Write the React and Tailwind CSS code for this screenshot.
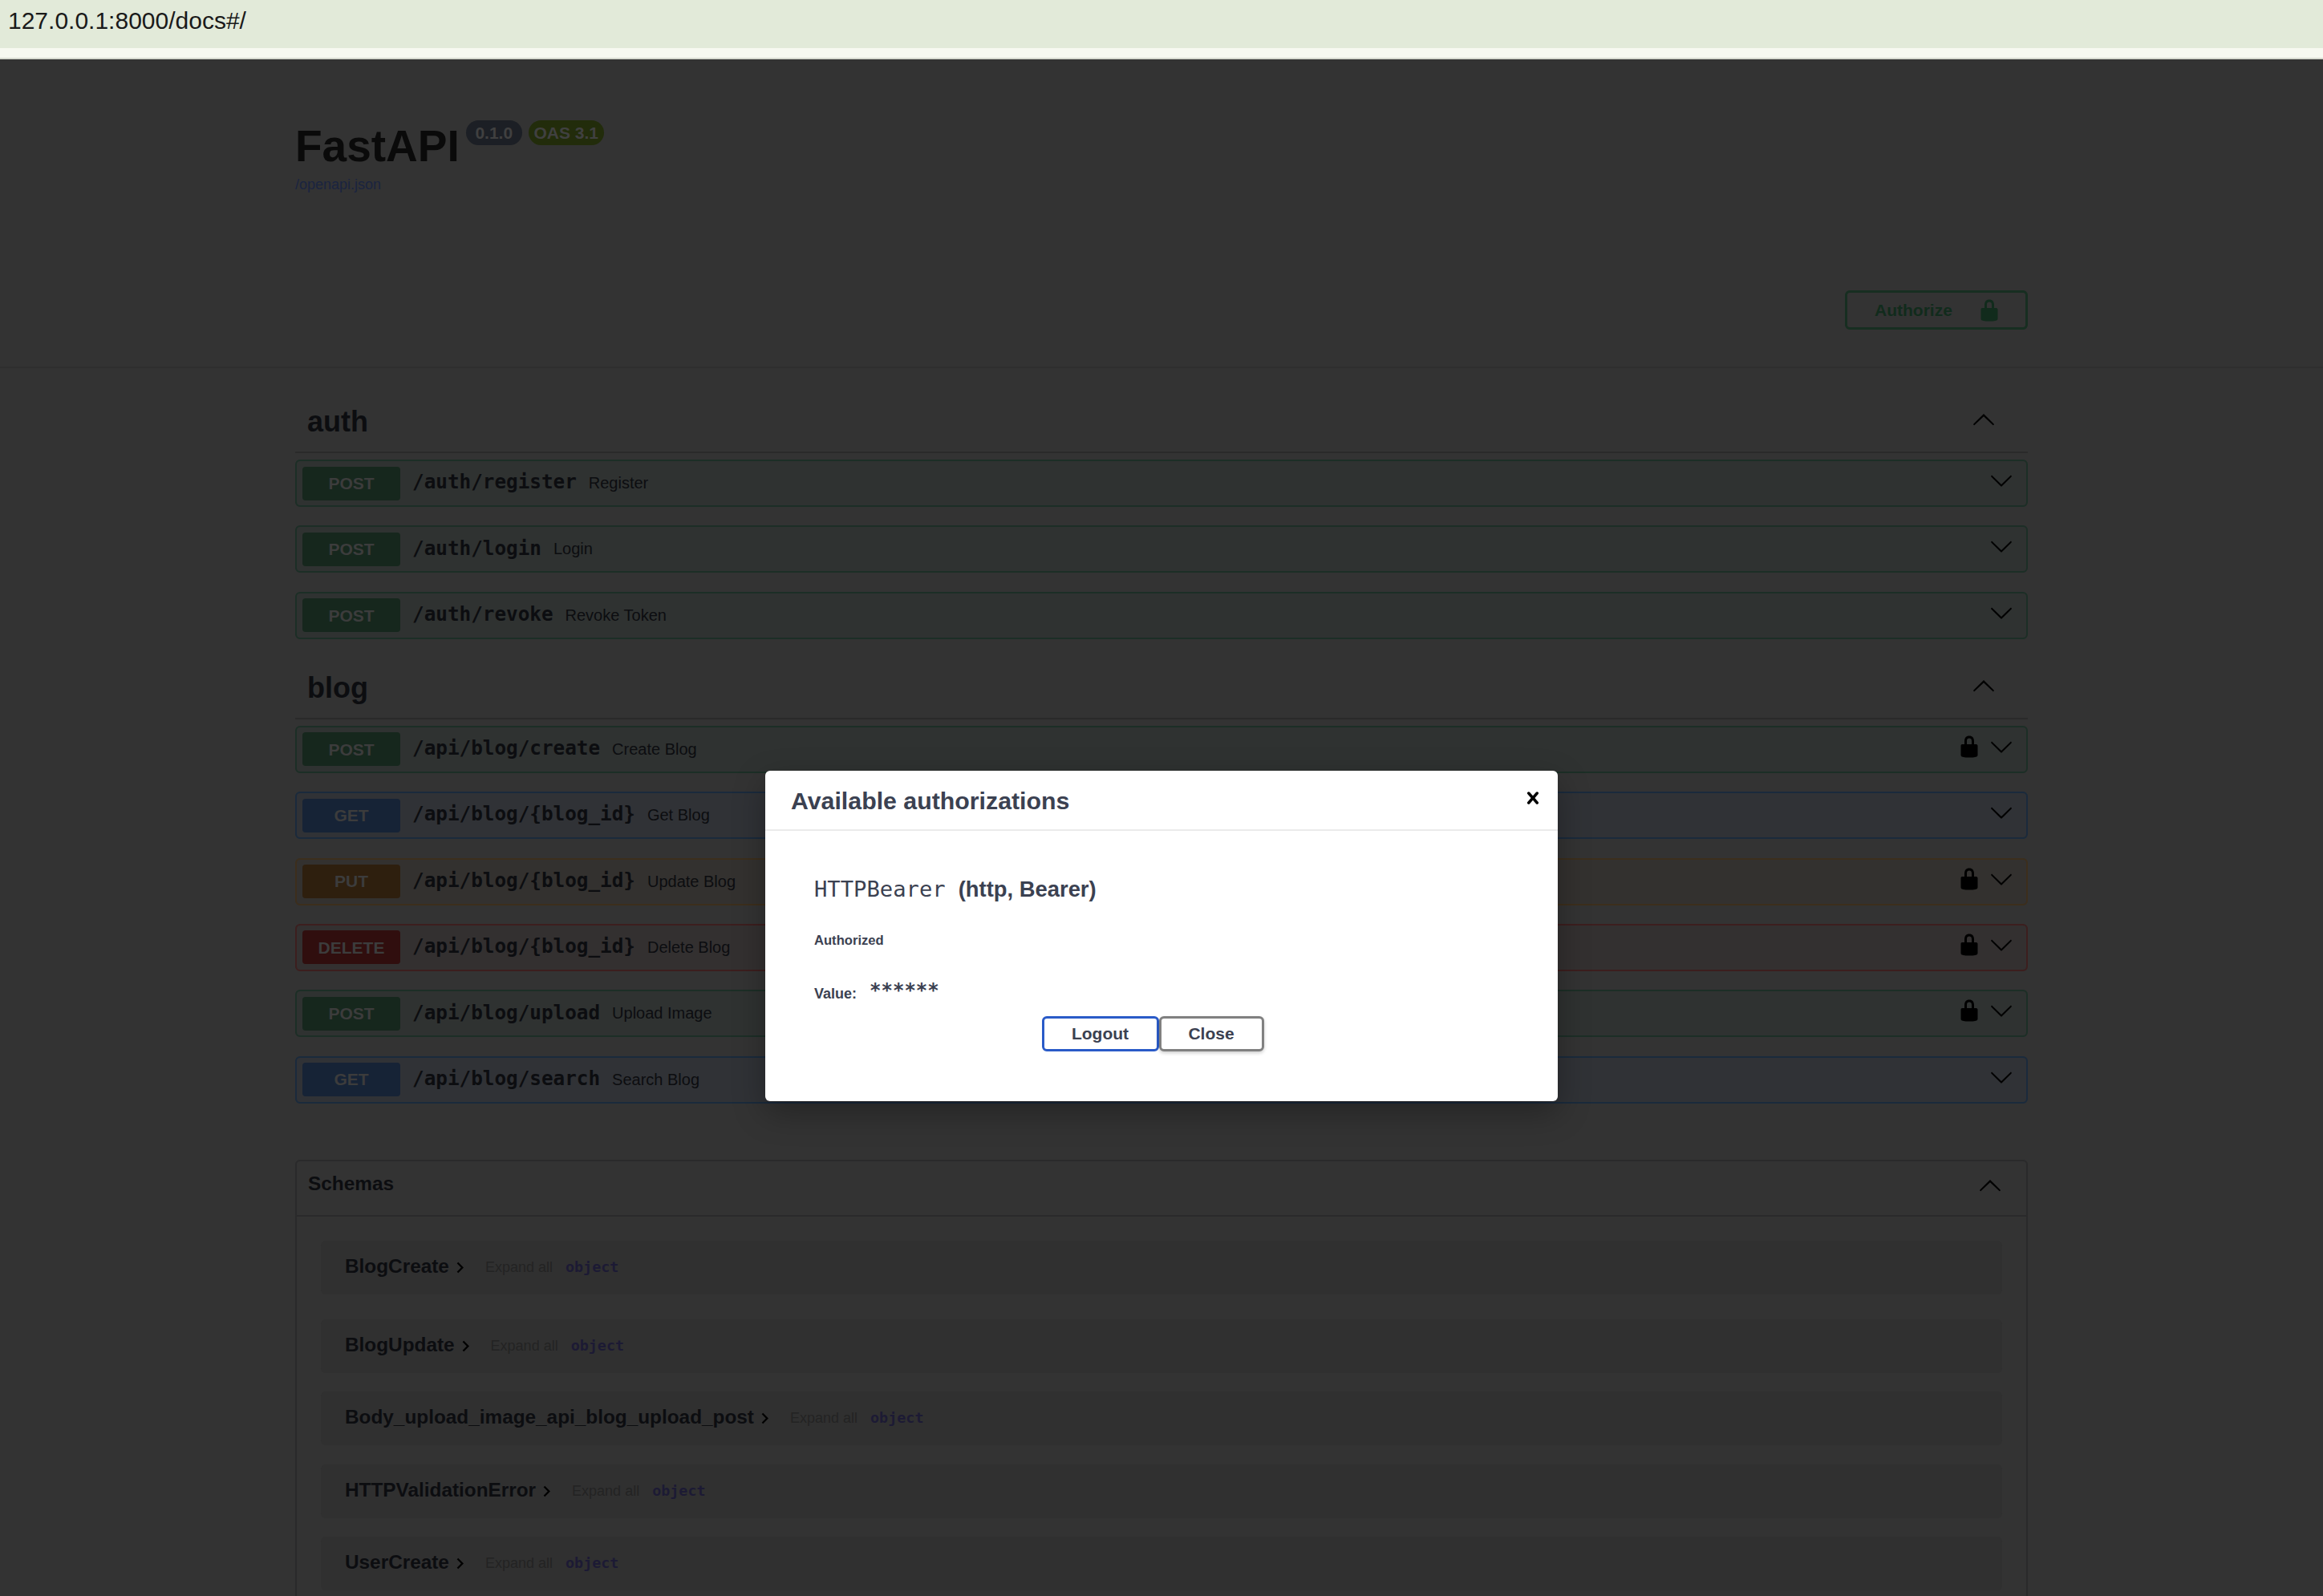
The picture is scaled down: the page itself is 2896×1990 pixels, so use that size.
import React from "react";

const LOCK = "M15.8 8H14V5.6C14 2.703 12.665 1 10 1 7.334 1 6 2.703 6 5.6V8H4c-.553 0-1 .646-1 1.199V17c0 .549.428 1.139.951 1.307l1.197.387C5.672 18.861 6.55 19 7.1 19h5.8c.549 0 1.428-.139 1.951-.307l1.196-.387c.524-.167.953-.757.953-1.306V9.199C17 8.646 16.352 8 15.8 8zM12 8H8V5.199C8 3.754 8.797 3 10 3c1.203 0 2 .754 2 2.199V8z";
const ARROW = "M17.418 6.109c.272-.268.709-.268.979 0s.271.701 0 .969l-7.908 7.83c-.27.268-.707.268-.979 0l-7.908-7.83c-.27-.268-.27-.701 0-.969.271-.268.709-.268.979 0L10 13.25l7.418-7.141z";
const CLOSE = "M14.348 14.849c-.469.469-1.229.469-1.697 0L10 11.819l-2.651 3.029c-.469.469-1.229.469-1.697 0-.469-.469-.469-1.229 0-1.697l2.758-3.15-2.759-3.152c-.469-.469-.469-1.228 0-1.697.469-.469 1.228-.469 1.697 0L10 8.183l2.651-3.031c.469-.469 1.228-.469 1.697 0 .469.469.469 1.229 0 1.697l-2.758 3.152 2.758 3.15c.469.469.469 1.229 0 1.698z";

const Icon = ({ d, className }) => (
  <svg viewBox="0 0 20 20" className={className} fill="currentColor">
    <path d={d} />
  </svg>
);

const STYLES = {
  POST: { row: "bg-[#2f3231] border-[#1c2e26]", badge: "bg-[#16271d]" },
  GET: { row: "bg-[#303236] border-[#1a2a3c]", badge: "bg-[#162336]" },
  PUT: { row: "bg-[#33312f] border-[#3c2e1c]", badge: "bg-[#2e1f0e]" },
  DELETE: { row: "bg-[#333030] border-[#3c1e1e]", badge: "bg-[#300e0e]" },
};

const Op = ({ method, path, summary, lock }) => {
  const s = STYLES[method];
  return (
    <div className={`h-[59px] flex items-center pl-[7px] pr-[16px] border-2 rounded-[6px] ${s.row}`}>
      <div className={`w-[122px] h-[42px] rounded-[4px] flex items-center justify-center text-[21px] font-bold text-[#3c3c3c] ${s.badge}`}>
        {method}
      </div>
      <span className="ml-[15px] mb-[2px] text-[24.3px] font-bold text-[#0c0d10] font-['DejaVu_Sans_Mono',monospace]">{path}</span>
      <span className="ml-[15px] mb-[1px] text-[20px] text-[#0c0d10]">{summary}</span>
      <div className="ml-auto flex items-center gap-[10px] mb-[7px] text-[#000000]">
        {lock && <Icon d={LOCK} className="w-[30px] h-[30px]" />}
        <Icon d={ARROW} className="w-[30px] h-[30px]" />
      </div>
    </div>
  );
};

const Tag = ({ name, className }) => (
  <div className={`h-[62px] flex items-start justify-between border-b-2 border-[#2a2a2a] pl-[15px] pr-[40px] pt-[3px] ${className}`}>
    <span className="text-[36px] leading-[40px] font-bold text-[#0c0d10]">{name}</span>
    <Icon d={ARROW} className="w-[30px] h-[30px] mt-[3px] rotate-180 text-[#000000]" />
  </div>
);

const Model = ({ name, className }) => (
  <div className={`h-[67px] rounded-[6px] bg-[#303030] flex items-center pl-[30px] ${className}`}>
    <span className="text-[24.35px] font-bold text-[#0c0d10] mb-[2px]">{name}</span>
    <svg viewBox="0 0 24 24" className="w-[27px] h-[27px] text-[#000000]" fill="currentColor">
      <path d="M10 6 8.59 7.41 13.17 12l-4.58 4.59L10 18l6-6z" />
    </svg>
    <span className="ml-[18px] text-[18px] text-[#232323]">Expand all</span>
    <span className="ml-[16px] text-[18.4px] font-bold text-[#1c1a34] font-['DejaVu_Sans_Mono',monospace]">object</span>
  </div>
);

export default function App() {
  return (
    <div className="relative w-[2896px] h-[1990px] overflow-hidden bg-[#333333] font-['Liberation_Sans',Arial,sans-serif]">
      <div className="h-[60px] bg-[#e2ead9] pl-[10px] pt-[8px] text-[30px] leading-[36px] text-[#1a1a1a]">127.0.0.1:8000/docs#/</div>
      <div className="h-[14px] bg-[#f7f9f1] border-b-2 border-[#d6d9cf]"></div>

      <header className="h-[385px] border-b-2 border-[#2e2e2e] px-[368px] pt-[76px]">
        <div className="flex items-start">
          <h1 className="mt-[2px] text-[55px] leading-[60px] font-bold text-[#0a0a0a]">FastAPI</h1>
          <span className="ml-[8px] h-[31px] w-[70px] rounded-[16px] bg-[#1c1f25] flex items-center justify-center text-[21px] font-bold text-[#404040]">0.1.0</span>
          <span className="ml-[8px] h-[31px] w-[94px] rounded-[16px] bg-[#222c0b] flex items-center justify-center text-[21px] font-bold text-[#404040]">OAS 3.1</span>
        </div>
        <div className="mt-[6px] text-[18px] leading-[24px] text-[#1a2440]">/openapi.json</div>
        <div className="mt-[120px] flex justify-end">
          <div className="w-[228px] h-[49px] rounded-[6px] border-[3px] border-[#172e21] flex items-center pl-[34px] text-[21px] font-bold text-[#112b1c]">
            Authorize
            <Icon d={LOCK} className="ml-[31px] w-[30px] h-[30px] text-[#112b1c]" />
          </div>
        </div>
      </header>

      <main className="px-[368px]">
        <Tag name="auth" className="mt-[44px]" />
        <div className="mt-[8px] flex flex-col gap-[23.4px]">
          <Op method="POST" path="/auth/register" summary="Register" />
          <Op method="POST" path="/auth/login" summary="Login" />
          <Op method="POST" path="/auth/revoke" summary="Revoke Token" />
        </div>

        <Tag name="blog" className="mt-[38px]" />
        <div className="mt-[8px] flex flex-col gap-[23.4px]">
          <Op method="POST" path="/api/blog/create" summary="Create Blog" lock />
          <Op method="GET" path="/api/blog/{blog_id}" summary="Get Blog" />
          <Op method="PUT" path="/api/blog/{blog_id}" summary="Update Blog" lock />
          <Op method="DELETE" path="/api/blog/{blog_id}" summary="Delete Blog" lock />
          <Op method="POST" path="/api/blog/upload" summary="Upload Image" lock />
          <Op method="GET" path="/api/blog/search" summary="Search Blog" />
        </div>

        <section className="mt-[70px] h-[700px] rounded-[6px] border-2 border-[#2a2a2b]">
          <div className="h-[69px] border-b-2 border-[#2a2a2b] pl-[14px] pr-[30px] pt-[13px] flex items-start justify-between">
            <span className="text-[24.4px] leading-[30px] font-bold text-[#0c0d10]">Schemas</span>
            <Icon d={ARROW} className="w-[30px] h-[30px] mt-[3px] rotate-180 text-[#000000]" />
          </div>
          <div className="px-[30px]">
            <Model name="BlogCreate" className="mt-[30px]" />
            <Model name="BlogUpdate" className="mt-[31px]" />
            <Model name="Body_upload_image_api_blog_upload_post" className="mt-[23px]" />
            <Model name="HTTPValidationError" className="mt-[24px]" />
            <Model name="UserCreate" className="mt-[23px]" />
          </div>
        </section>
      </main>

      <div className="absolute left-[954px] top-[961px] w-[988px] h-[412px] rounded-[6px] bg-[#ffffff] shadow-[0_14px_40px_rgba(0,0,0,0.3)] text-[#3b4151]">
        <div className="relative h-[75px] border-b-2 border-[#ebebeb] pl-[32px] pt-[20px]">
          <h3 className="text-[30.3px] leading-[36px] font-bold">Available authorizations</h3>
          <button className="absolute left-[942px] top-[19px] text-[#000000]">
            <Icon d={CLOSE} className="w-[30px] h-[30px]" />
          </button>
        </div>
        <div className="pl-[61px] pr-[83px] pt-[57px]">
          <div className="flex items-center h-[32px]">
            <span className="text-[27.2px] font-['DejaVu_Sans_Mono',monospace]">HTTPBearer</span>
            <span className="ml-[16px] text-[27.4px] font-bold">(http, Bearer)</span>
          </div>
          <div className="mt-[36px] text-[16.6px] leading-[24px] font-bold">Authorized</div>
          <div className="mt-[42px] flex items-start h-[24px]">
            <span className="text-[18px] leading-[24px] font-bold">Value:</span>
            <span className="ml-[16px] -mt-[7px] text-[24px] leading-[30px] font-bold font-['DejaVu_Sans_Mono',monospace]">******</span>
          </div>
          <div className="mt-[16px] flex justify-center">
            <button className="w-[146px] h-[44px] rounded-[6px] border-[3px] border-[#2a5bc8] bg-[#ffffff] text-[21px] font-bold">Logout</button>
            <button className="w-[131px] h-[44px] rounded-[6px] border-[3px] border-[#808080] bg-[#ffffff] text-[21px] font-bold shadow-[0_2px_4px_rgba(0,0,0,0.2)]">Close</button>
          </div>
        </div>
      </div>
    </div>
  );
}
